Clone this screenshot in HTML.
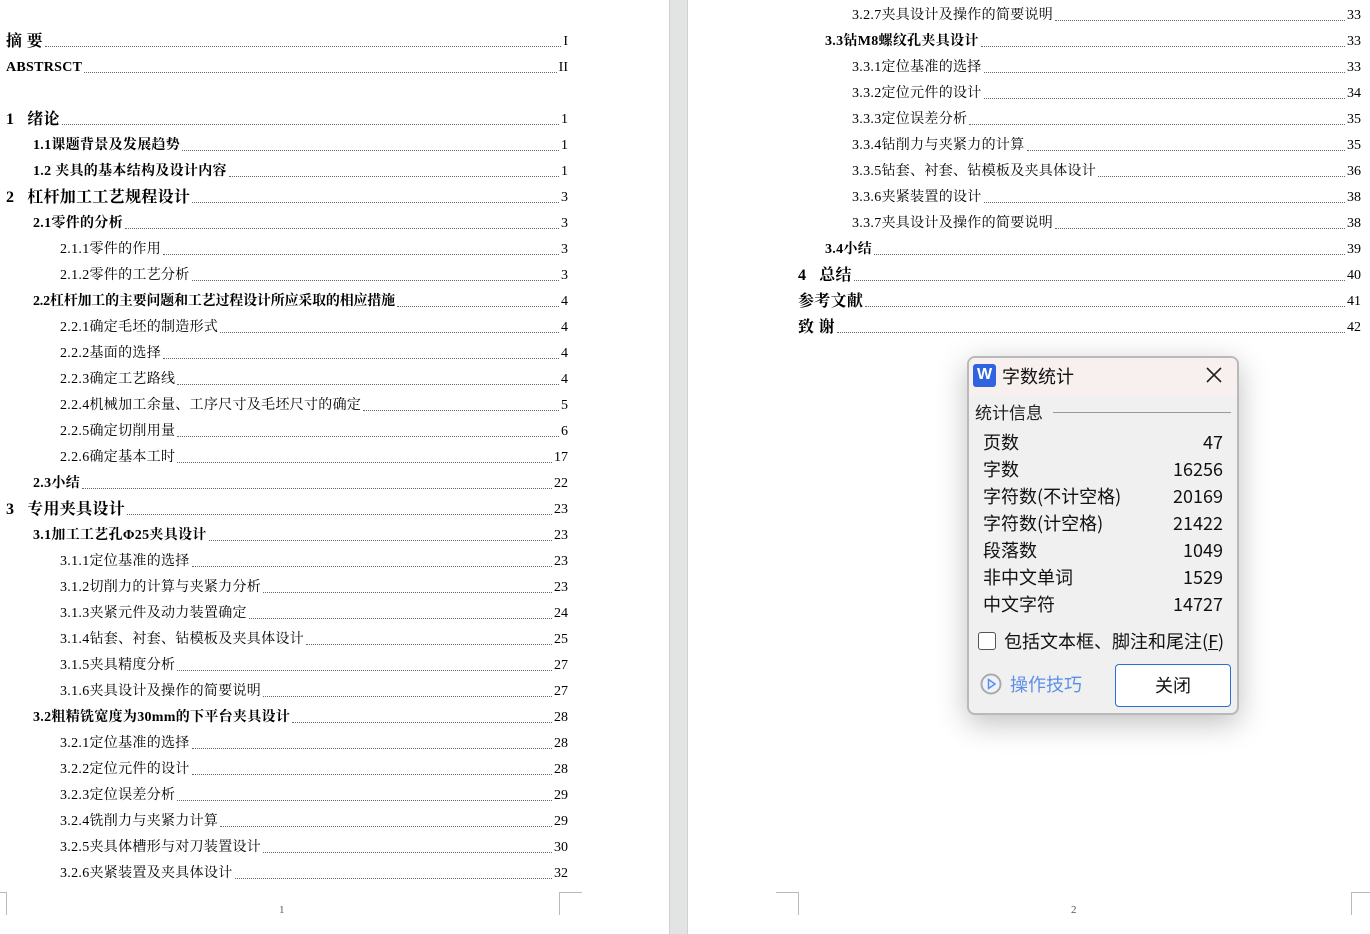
<!DOCTYPE html>
<html><head><meta charset="utf-8"><style>
*{margin:0;padding:0;box-sizing:border-box}
body{width:1370px;height:934px;position:relative;background:#fff;overflow:hidden;font-family:"Liberation Serif","Noto Serif CJK SC",serif;color:#000}
.sep{position:absolute;left:669px;top:0;width:19px;height:934px;background:#e2e4e3;border-left:1px solid #d0d2d1;border-right:1px solid #d0d2d1}
.r{position:absolute;display:flex;align-items:flex-end;height:20px;font-size:14px;line-height:20px;white-space:nowrap;letter-spacing:0.3px}
.r .d{flex:1;border-bottom:1px dotted #666;margin:0 2px 5px 2px}
.r .n{font-size:14px;font-weight:normal;letter-spacing:0}
.b{font-weight:bold}
.l1{font-size:16px;font-weight:bold}
.L{right:802px}
.R{right:9px}
.c{position:absolute;border-color:#bbb;border-style:solid;border-width:0}
.dlg{position:absolute;left:967px;top:356px;width:272px;height:359px;border:2px solid #b9b9b9;border-radius:8px;background:#f0f0f0;box-shadow:0 8px 30px rgba(0,0,0,.25);font-family:"Noto Sans CJK SC","Liberation Sans",sans-serif;overflow:hidden}
.dlg .t{height:37px;background:#f8f0ee;position:relative}
.dlg .row{position:absolute;left:14px;width:240px;font-size:18px;display:flex;justify-content:space-between;line-height:24px;color:#111}
</style></head><body>
<div class="sep"></div>

<div class="r l1 L" style="left:6px;top:32px"><span>摘 要</span><span class="d"></span><span class="n">I</span></div>
<div class="r b L" style="left:6px;top:58px"><span>ABSTRSCT</span><span class="d"></span><span class="n">II</span></div>
<div class="r l1 L" style="left:6px;top:110px"><span>1&nbsp;&nbsp;&nbsp;绪论</span><span class="d"></span><span class="n">1</span></div>
<div class="r b L" style="left:33px;top:136px"><span>1.1课题背景及发展趋势</span><span class="d"></span><span class="n">1</span></div>
<div class="r b L" style="left:33px;top:162px"><span>1.2 夹具的基本结构及设计内容</span><span class="d"></span><span class="n">1</span></div>
<div class="r l1 L" style="left:6px;top:188px"><span>2&nbsp;&nbsp;&nbsp;杠杆加工工艺规程设计</span><span class="d"></span><span class="n">3</span></div>
<div class="r b L" style="left:33px;top:214px"><span>2.1零件的分析</span><span class="d"></span><span class="n">3</span></div>
<div class="r L" style="left:60px;top:240px"><span>2.1.1零件的作用</span><span class="d"></span><span class="n">3</span></div>
<div class="r L" style="left:60px;top:266px"><span>2.1.2零件的工艺分析</span><span class="d"></span><span class="n">3</span></div>
<div class="r b L" style="left:33px;top:292px;letter-spacing:-0.2px"><span>2.2杠杆加工的主要问题和工艺过程设计所应采取的相应措施</span><span class="d"></span><span class="n">4</span></div>
<div class="r L" style="left:60px;top:318px"><span>2.2.1确定毛坯的制造形式</span><span class="d"></span><span class="n">4</span></div>
<div class="r L" style="left:60px;top:344px"><span>2.2.2基面的选择</span><span class="d"></span><span class="n">4</span></div>
<div class="r L" style="left:60px;top:370px"><span>2.2.3确定工艺路线</span><span class="d"></span><span class="n">4</span></div>
<div class="r L" style="left:60px;top:396px"><span>2.2.4机械加工余量、工序尺寸及毛坯尺寸的确定</span><span class="d"></span><span class="n">5</span></div>
<div class="r L" style="left:60px;top:422px"><span>2.2.5确定切削用量</span><span class="d"></span><span class="n">6</span></div>
<div class="r L" style="left:60px;top:448px"><span>2.2.6确定基本工时</span><span class="d"></span><span class="n">17</span></div>
<div class="r b L" style="left:33px;top:474px"><span>2.3小结</span><span class="d"></span><span class="n">22</span></div>
<div class="r l1 L" style="left:6px;top:500px"><span>3&nbsp;&nbsp;&nbsp;专用夹具设计</span><span class="d"></span><span class="n">23</span></div>
<div class="r b L" style="left:33px;top:526px"><span>3.1加工工艺孔Φ25夹具设计</span><span class="d"></span><span class="n">23</span></div>
<div class="r L" style="left:60px;top:552px"><span>3.1.1定位基准的选择</span><span class="d"></span><span class="n">23</span></div>
<div class="r L" style="left:60px;top:578px"><span>3.1.2切削力的计算与夹紧力分析</span><span class="d"></span><span class="n">23</span></div>
<div class="r L" style="left:60px;top:604px"><span>3.1.3夹紧元件及动力装置确定</span><span class="d"></span><span class="n">24</span></div>
<div class="r L" style="left:60px;top:630px"><span>3.1.4钻套、衬套、钻模板及夹具体设计</span><span class="d"></span><span class="n">25</span></div>
<div class="r L" style="left:60px;top:656px"><span>3.1.5夹具精度分析</span><span class="d"></span><span class="n">27</span></div>
<div class="r L" style="left:60px;top:682px"><span>3.1.6夹具设计及操作的简要说明</span><span class="d"></span><span class="n">27</span></div>
<div class="r b L" style="left:33px;top:708px"><span>3.2粗精铣宽度为30mm的下平台夹具设计</span><span class="d"></span><span class="n">28</span></div>
<div class="r L" style="left:60px;top:734px"><span>3.2.1定位基准的选择</span><span class="d"></span><span class="n">28</span></div>
<div class="r L" style="left:60px;top:760px"><span>3.2.2定位元件的设计</span><span class="d"></span><span class="n">28</span></div>
<div class="r L" style="left:60px;top:786px"><span>3.2.3定位误差分析</span><span class="d"></span><span class="n">29</span></div>
<div class="r L" style="left:60px;top:812px"><span>3.2.4铣削力与夹紧力计算</span><span class="d"></span><span class="n">29</span></div>
<div class="r L" style="left:60px;top:838px"><span>3.2.5夹具体槽形与对刀装置设计</span><span class="d"></span><span class="n">30</span></div>
<div class="r L" style="left:60px;top:864px"><span>3.2.6夹紧装置及夹具体设计</span><span class="d"></span><span class="n">32</span></div>
<div class="c" style="left:0;top:892px;width:7px;height:23px;border-right-width:1px;border-top-width:1px"></div>
<div class="c" style="left:559px;top:892px;width:23px;height:23px;border-left-width:1px;border-top-width:1px"></div>
<div style="position:absolute;left:279px;top:904px;font-size:11px;color:#555">1</div>

<div class="r R" style="left:852px;top:6px"><span>3.2.7夹具设计及操作的简要说明</span><span class="d"></span><span class="n">33</span></div>
<div class="r b R" style="left:825px;top:32px"><span>3.3钻M8螺纹孔夹具设计</span><span class="d"></span><span class="n">33</span></div>
<div class="r R" style="left:852px;top:58px"><span>3.3.1定位基准的选择</span><span class="d"></span><span class="n">33</span></div>
<div class="r R" style="left:852px;top:84px"><span>3.3.2定位元件的设计</span><span class="d"></span><span class="n">34</span></div>
<div class="r R" style="left:852px;top:110px"><span>3.3.3定位误差分析</span><span class="d"></span><span class="n">35</span></div>
<div class="r R" style="left:852px;top:136px"><span>3.3.4钻削力与夹紧力的计算</span><span class="d"></span><span class="n">35</span></div>
<div class="r R" style="left:852px;top:162px"><span>3.3.5钻套、衬套、钻模板及夹具体设计</span><span class="d"></span><span class="n">36</span></div>
<div class="r R" style="left:852px;top:188px"><span>3.3.6夹紧装置的设计</span><span class="d"></span><span class="n">38</span></div>
<div class="r R" style="left:852px;top:214px"><span>3.3.7夹具设计及操作的简要说明</span><span class="d"></span><span class="n">38</span></div>
<div class="r b R" style="left:825px;top:240px"><span>3.4小结</span><span class="d"></span><span class="n">39</span></div>
<div class="r l1 R" style="left:798px;top:266px"><span>4&nbsp;&nbsp;&nbsp;总结</span><span class="d"></span><span class="n">40</span></div>
<div class="r l1 R" style="left:798px;top:292px"><span>参考文献</span><span class="d"></span><span class="n">41</span></div>
<div class="r l1 R" style="left:798px;top:318px"><span>致 谢</span><span class="d"></span><span class="n">42</span></div>
<div class="c" style="left:776px;top:892px;width:23px;height:23px;border-right-width:1px;border-top-width:1px"></div>
<div class="c" style="left:1351px;top:892px;width:19px;height:23px;border-left-width:1px;border-top-width:1px"></div>
<div style="position:absolute;left:1071px;top:904px;font-size:11px;color:#555">2</div>

<div class="dlg">
  <div class="t">
    <div style="position:absolute;left:4px;top:6px;width:23px;height:23px;background:#2f63e0;border-radius:3px;color:#fff;font:bold 16px 'Liberation Sans',sans-serif;text-align:center;line-height:22px">W</div>
    <div style="position:absolute;left:33px;top:4px;font-size:18px;line-height:28px;color:#111">字数统计</div>
    <svg style="position:absolute;left:237px;top:9px" width="16" height="16" viewBox="0 0 16 16"><path d="M1 1L15 15M15 1L1 15" stroke="#222" stroke-width="1.6"/></svg>
  </div>
  <div style="position:absolute;left:6px;top:43px;font-size:17px;color:#222;line-height:22px">统计信息</div>
  <div style="position:absolute;left:84px;top:54px;width:178px;height:1px;background:#999"></div>
  <div class="row" style="top:72px"><span>页数</span><span>47</span></div>
  <div class="row" style="top:99px"><span>字数</span><span>16256</span></div>
  <div class="row" style="top:126px"><span>字符数(不计空格)</span><span>20169</span></div>
  <div class="row" style="top:153px"><span>字符数(计空格)</span><span>21422</span></div>
  <div class="row" style="top:180px"><span>段落数</span><span>1049</span></div>
  <div class="row" style="top:207px"><span>非中文单词</span><span>1529</span></div>
  <div class="row" style="top:234px"><span>中文字符</span><span>14727</span></div>
  <div style="position:absolute;left:9px;top:274px;width:18px;height:18px;border:1.5px solid #555;border-radius:3px;background:#fff"></div>
  <div style="position:absolute;left:35px;top:271px;font-size:18px;line-height:24px;color:#111">包括文本框、脚注和尾注(<u>F</u>)</div>
  <svg style="position:absolute;left:11px;top:315px" width="22" height="22" viewBox="0 0 22 22"><circle cx="11" cy="11" r="9.5" fill="#eef2fb" stroke="#aaa" stroke-width="2"/><path d="M8.5 6.5L15 11L8.5 15.5Z" fill="none" stroke="#5a8ee8" stroke-width="1.5"/></svg>
  <div style="position:absolute;left:41px;top:314px;font-size:18px;line-height:24px;color:#5b8fe8">操作技巧</div>
  <div style="position:absolute;left:146px;top:306px;width:116px;height:43px;border:1px solid #2a6fcf;border-radius:4px;background:#fff;text-align:center;line-height:41px;font-size:18px;color:#111">关闭</div>
</div>
</body></html>
